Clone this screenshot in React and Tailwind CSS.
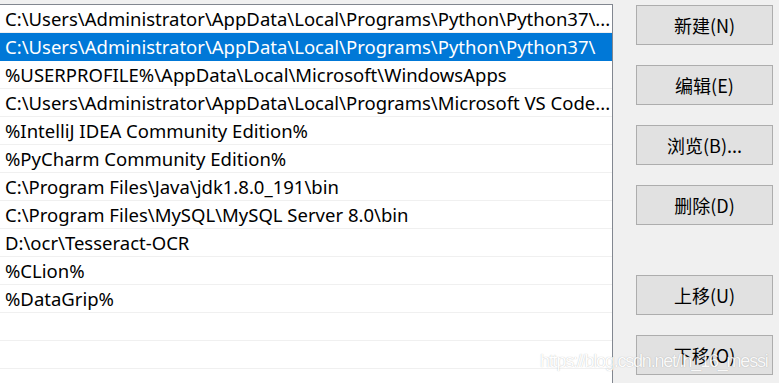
import React from "react";

const rows = [
  "C:\\Users\\Administrator\\AppData\\Local\\Programs\\Python\\Python37\\...",
  "C:\\Users\\Administrator\\AppData\\Local\\Programs\\Python\\Python37\\",
  "%USERPROFILE%\\AppData\\Local\\Microsoft\\WindowsApps",
  "C:\\Users\\Administrator\\AppData\\Local\\Programs\\Microsoft VS Code...",
  "%IntelliJ IDEA Community Edition%",
  "%PyCharm Community Edition%",
  "C:\\Program Files\\Java\\jdk1.8.0_191\\bin",
  "C:\\Program Files\\MySQL\\MySQL Server 8.0\\bin",
  "D:\\ocr\\Tesseract-OCR",
  "%CLion%",
  "%DataGrip%",
  "",
  "",
  "",
];

function Btn({ children }) {
  return (
    <div className="h-[40px] w-[137px] border border-[#adadad] bg-[#e1e1e1] flex items-center justify-center text-[18px] text-black [font-family:'Noto_Sans_CJK_SC',sans-serif]">
      {children}
    </div>
  );
}

export default function App() {
  return (
    <div className="relative w-[779px] h-[383px] overflow-hidden bg-[#f0f0f0] flex">
      <div className="w-[613px] pt-[4px] shrink-0">
        <div className="h-full bg-white border-t border-r border-[#828790]">
          {rows.map((r, i) => (
            <div
              key={i}
              className={
                "h-[28px] border-b pl-[5px] flex items-center whitespace-nowrap overflow-hidden text-[18.5px] [font-family:'Noto_Sans',sans-serif] " +
                (i === 1
                  ? "bg-[#0078d7] text-white border-[#0078d7]"
                  : "text-black border-[#f0f0f0]")
              }
            >
              {r}
            </div>
          ))}
        </div>
      </div>
      <div className="pl-[23px] pt-[5px] flex flex-col">
        <div className="flex flex-col gap-[20px]">
          <Btn>新建(N)</Btn>
          <Btn>编辑(E)</Btn>
          <Btn>浏览(B)...</Btn>
          <Btn>删除(D)</Btn>
        </div>
        <div className="mt-[50px] flex flex-col gap-[20px]">
          <Btn>上移(U)</Btn>
          <Btn>下移(O)</Btn>
        </div>
      </div>
      <div className="absolute left-[540px] top-[349px] text-[18px] leading-[24px] tracking-[-1.2px] text-white [font-family:'Liberation_Sans',sans-serif] [text-shadow:0_0_1px_rgba(0,0,0,0.35)] opacity-80 whitespace-nowrap">
        https://blog.csdn.net/lh_16_messi
      </div>
    </div>
  );
}
